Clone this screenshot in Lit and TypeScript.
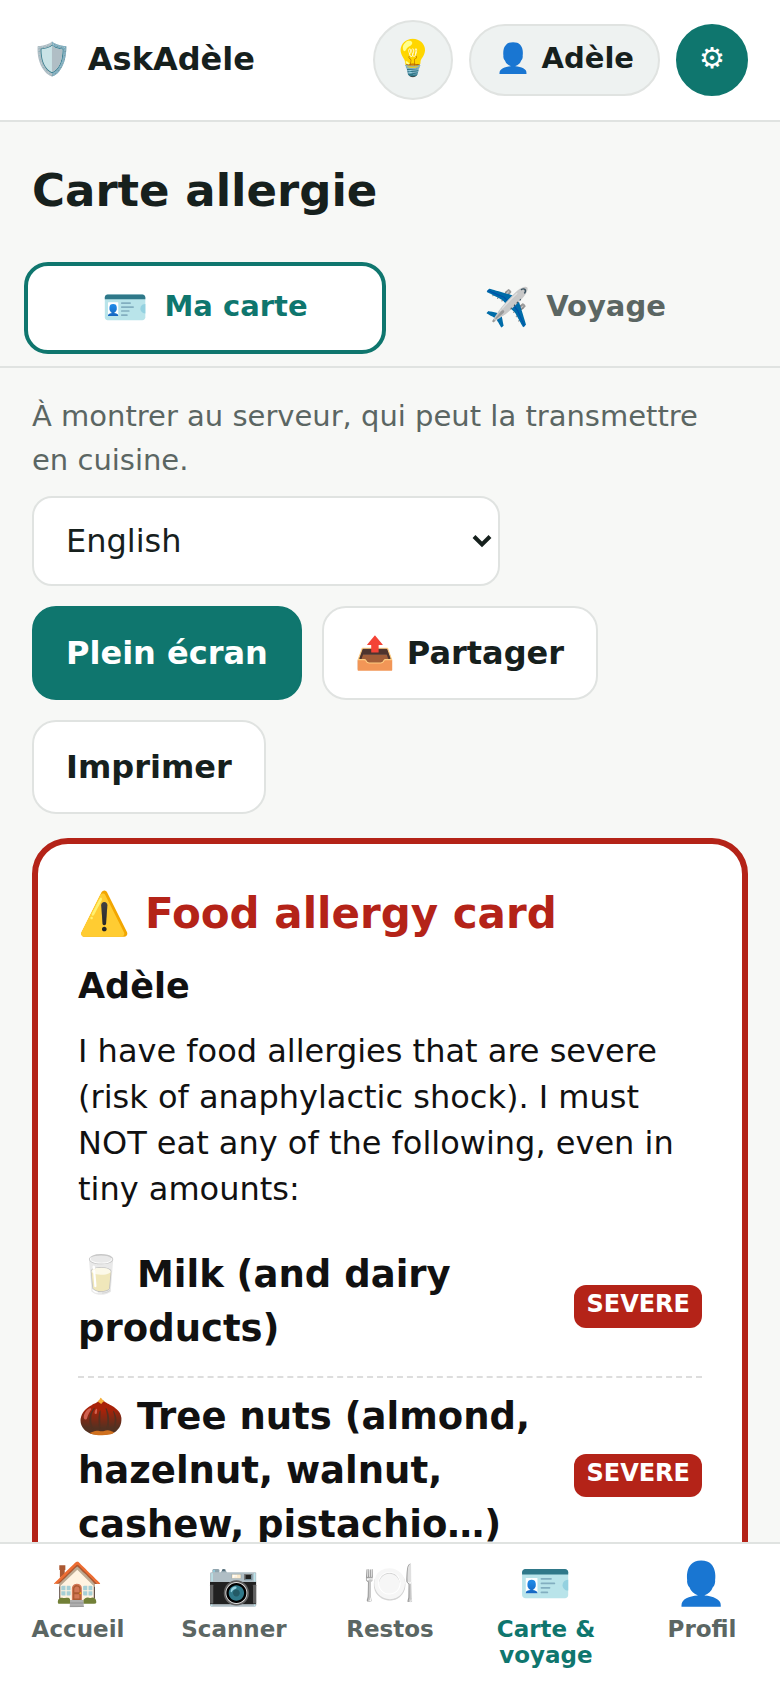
import { LitElement, html, css } from "lit";
import { customElement, state } from "lit/decorators.js";

interface NavItem {
  icon: string;
  label: string;
}

interface Allergen {
  label: string;
  level: string;
}

const NAV: NavItem[] = [
  { icon: "🏠", label: "Accueil" },
  { icon: "📷", label: "Scanner" },
  { icon: "🍽️", label: "Restos" },
  { icon: "🪪", label: "Carte & voyage" },
  { icon: "👤", label: "Profil" },
];

const TABS: NavItem[] = [
  { icon: "🪪", label: "Ma carte" },
  { icon: "✈️", label: "Voyage" },
];

const ALLERGENS: Allergen[] = [
  { label: "🥛 Milk (and dairy products)", level: "SEVERE" },
  { label: "🌰 Tree nuts (almond, hazelnut, walnut, cashew, pistachio…)", level: "SEVERE" },
];

@customElement("app-root")
export class AppRoot extends LitElement {
  @state() private tab = 0;
  @state() private page = 3;

  static styles = css`
    :host {
      --teal: #0f766e;
      --red: #b42318;
      --ink: #16201d;
      --muted: #5b6663;
      --line: #e0e3e1;
      --page: #f7f8f6;
      display: flex;
      flex-direction: column;
      height: 100vh;
      background: var(--page);
      color: var(--ink);
      font-family: "DejaVu Sans", "Noto Color Emoji", sans-serif;
      font-size: 32px;
      line-height: 48px;
    }
    * {
      box-sizing: border-box;
    }
    button,
    select {
      font: inherit;
      color: inherit;
      margin: 0;
      cursor: pointer;
    }
    h1,
    h2,
    p,
    ul {
      margin: 0;
      padding: 0;
    }
    .top {
      flex: none;
      display: flex;
      align-items: center;
      gap: 16px;
      padding: 20px 32px;
      background: #fff;
      border-bottom: 2px solid var(--line);
    }
    .brand {
      display: flex;
      align-items: center;
      gap: 16px;
      margin-right: auto;
      padding-bottom: 2px;
      font-weight: 700;
    }
    .chip {
      display: flex;
      align-items: center;
      justify-content: center;
      height: 72px;
      padding: 0 24px 4px;
      border: 2px solid var(--line);
      border-radius: 40px;
      background: #eef2f1;
      font-size: 29px;
      font-weight: 700;
      white-space: pre;
    }
    .tip {
      width: 80px;
      height: 80px;
      padding: 0 0 4px;
      font-size: 35px;
      font-weight: 400;
    }
    .gear {
      width: 72px;
      padding: 0 0 4px;
      border-color: var(--teal);
      background: var(--teal);
      color: #fff;
    }
    .scroll {
      flex: 1;
      min-height: 0;
      overflow-y: auto;
      scrollbar-width: none;
    }
    .title {
      padding: 36px 32px 26px;
      font-size: 45px;
      line-height: 66px;
    }
    .tabs {
      display: grid;
      grid-template-columns: 1fr 1fr;
      gap: 8px;
      padding: 12px 24px;
      border-bottom: 2px solid var(--line);
    }
    .tab {
      display: flex;
      align-items: center;
      justify-content: center;
      gap: 16px;
      height: 92px;
      padding: 0 0 4px;
      border: 4px solid transparent;
      border-radius: 24px;
      background: none;
      color: var(--muted);
      font-size: 29px;
      font-weight: 700;
    }
    .tab.on {
      border-color: var(--teal);
      background: #fff;
      color: var(--teal);
    }
    .tab-icon {
      padding-top: 4px;
      font-size: 37px;
      font-weight: 400;
    }
    .body {
      padding: 26px 32px 32px;
    }
    .hint {
      padding-right: 16px;
      color: var(--muted);
      font-size: 29px;
      line-height: 44px;
    }
    .actions {
      display: flex;
      flex-wrap: wrap;
      gap: 20px;
      padding: 14px 0 24px;
    }
    .picker {
      position: relative;
      flex: 0 1 468px;
      margin-right: auto;
    }
    .picker select {
      display: block;
      width: 100%;
      height: 90px;
      padding: 0 32px;
      appearance: none;
      border: 2px solid var(--line);
      border-radius: 20px;
      background: #fff;
    }
    .chevron {
      position: absolute;
      right: 8px;
      top: 38px;
      width: 20px;
      height: 14px;
      pointer-events: none;
    }
    .btn {
      height: 94px;
      padding: 0 32px;
      border: 2px solid var(--line);
      border-radius: 24px;
      background: #fff;
      font-weight: 700;
    }
    .btn.primary {
      border-color: var(--teal);
      background: var(--teal);
      color: #fff;
    }
    .card {
      padding: 40px;
      border: 6px solid var(--red);
      border-radius: 36px;
      background: #fff;
      color: #111;
    }
    .card-title {
      color: var(--red);
      font-size: 42px;
      line-height: 60px;
    }
    .who {
      padding: 17px 0;
      font-size: 35px;
      font-weight: 700;
      line-height: 50px;
    }
    .intro {
      line-height: 46px;
    }
    .list {
      padding-top: 24px;
      list-style: none;
    }
    .item {
      display: flex;
      align-items: center;
      justify-content: space-between;
      gap: 24px;
      padding: 12px 0;
      border-bottom: 2px dashed #dddddd;
    }
    .name {
      padding-bottom: 8px;
      font-size: 37px;
      font-weight: 700;
      line-height: 54px;
    }
    .level {
      flex: none;
      padding: 2px 12px 6px;
      border-radius: 12px;
      background: var(--red);
      color: #fff;
      font-size: 24px;
      font-weight: 700;
      line-height: 35px;
    }
    .nav {
      flex: none;
      display: grid;
      grid-template-columns: repeat(5, 1fr);
      padding: 12px 0 20px;
      border-top: 2px solid var(--line);
      background: #fff;
    }
    .nav-item {
      display: flex;
      flex-direction: column;
      align-items: center;
      gap: 4px;
      padding: 0 16px;
      color: var(--muted);
      font-size: 23px;
      font-weight: 700;
      line-height: 26px;
      text-align: center;
      text-decoration: none;
    }
    .nav-item.on {
      color: var(--teal);
    }
    .nav-icon {
      font-size: 42px;
      font-weight: 400;
      line-height: 56px;
    }
  `;

  private go(event: Event, index: number) {
    event.preventDefault();
    this.page = index;
  }

  render() {
    return html`
      <header class="top">
        <div class="brand"><span>🛡️</span><span>AskAdèle</span></div>
        <button class="chip tip" aria-label="Astuces">💡</button>
        <button class="chip">👤 Adèle</button>
        <button class="chip gear" aria-label="Réglages">⚙</button>
      </header>
      <main class="scroll">
        <h1 class="title">Carte allergie</h1>
        <div class="tabs" role="tablist">
          ${TABS.map(
            (t, i) => html`<button
              class="tab ${i === this.tab ? "on" : ""}"
              role="tab"
              aria-selected=${i === this.tab}
              @click=${() => (this.tab = i)}
            ><span class="tab-icon">${t.icon}</span><span>${t.label}</span></button>`
          )}
        </div>
        <section class="body">
          <p class="hint">À montrer au serveur, qui peut la transmettre en cuisine.</p>
          <div class="actions">
            <label class="picker">
              <select aria-label="Langue de la carte">
                <option>English</option>
                <option>Français</option>
                <option>Español</option>
              </select>
              <svg class="chevron" viewBox="0 0 20 14" aria-hidden="true">
                <path d="M2 2.5 L10 10.5 L18 2.5" fill="none" stroke="#16201d" stroke-width="4" />
              </svg>
            </label>
            <button class="btn primary">Plein écran</button>
            <button class="btn">📤 Partager</button>
            <button class="btn">Imprimer</button>
          </div>
          <article class="card">
            <h2 class="card-title">⚠️ Food allergy card</h2>
            <p class="who">Adèle</p>
            <p class="intro">
              I have food allergies that are severe (risk of anaphylactic shock). I must NOT eat any of
              the following, even in tiny amounts:
            </p>
            <ul class="list">
              ${ALLERGENS.map(
                (a) => html`<li class="item">
                  <span class="name">${a.label}</span>
                  <span class="level">${a.level}</span>
                </li>`
              )}
            </ul>
          </article>
        </section>
      </main>
      <nav class="nav">
        ${NAV.map(
          (n, i) => html`<a class="nav-item ${i === this.page ? "on" : ""}" href="#" @click=${(e: Event) => this.go(e, i)}
            ><span class="nav-icon">${n.icon}</span><span>${n.label}</span></a
          >`
        )}
      </nav>
    `;
  }
}
